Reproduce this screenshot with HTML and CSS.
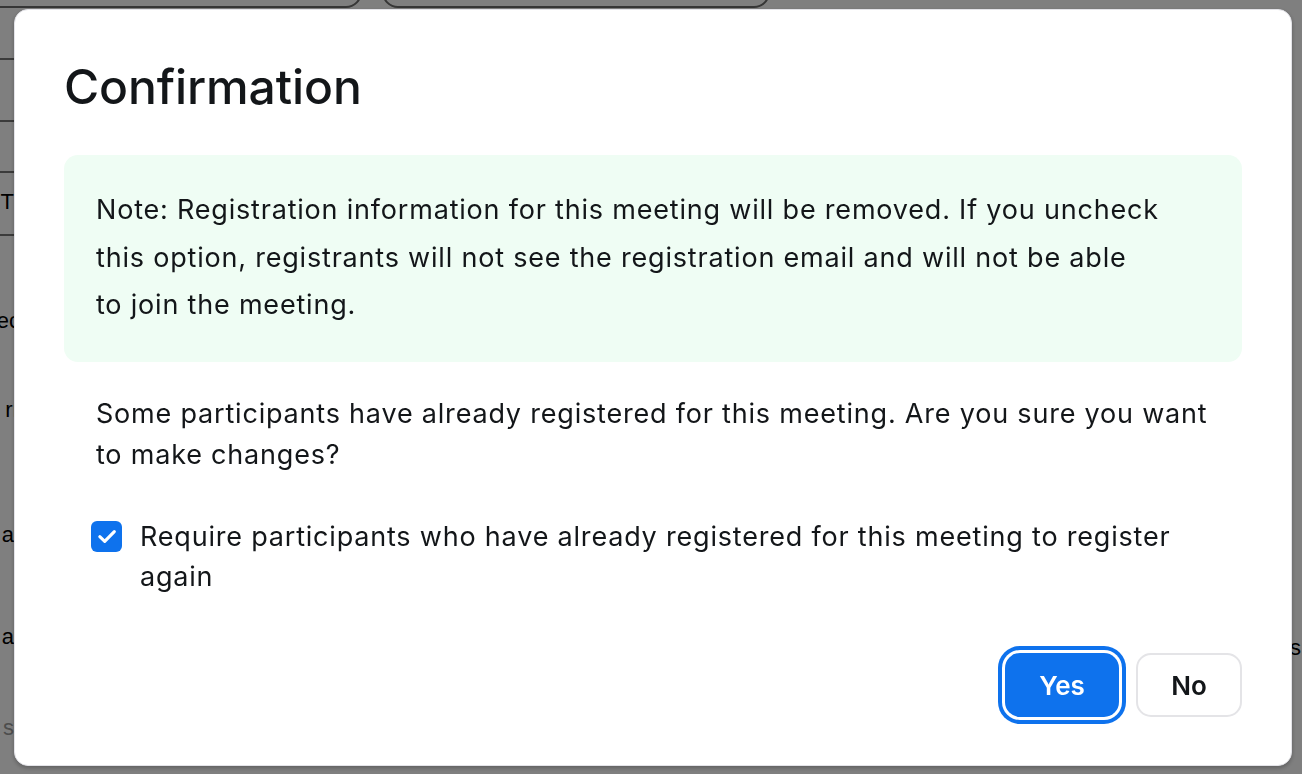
FILE: index.html
```html
<!DOCTYPE html>
<html lang="en">
<head>
<meta charset="utf-8">
<title>Confirmation</title>
<link rel="stylesheet" href="styles.css">
</head>
<body>
<div class="page">
  <div class="page-inputs">
    <div class="pin pin-a"></div>
    <div class="pin pin-b"></div>
  </div>
  <div class="page-body">
    <div class="page-left">
      <div class="prow h52"></div>
      <div class="prow h62"></div>
      <div class="prow h51"></div>
      <div class="prow h63"><span class="frag">IT</span></div>
      <div class="ftxt m70"><span class="frag">ec</span></div>
      <div class="ftxt m59"><span class="frag">rr</span></div>
      <div class="ftxt m95"><span class="frag">at</span></div>
      <div class="ftxt m72"><span class="frag">at</span></div>
      <div class="ftxt m61 muted"><span class="frag">st</span></div>
    </div>
    <div class="page-right">
      <div class="ftxt rfrag">s</div>
    </div>
  </div>
</div>

<div class="overlay">
  <div class="modal" role="dialog" aria-labelledby="dlg-title">
    <h1 class="modal-title" id="dlg-title">Confirmation</h1>
    <div class="note">
      Note: Registration information for this meeting will be removed. If you uncheck<br>
      this option, registrants will not see the registration email and will not be able<br>
      to join the meeting.
    </div>
    <p class="question">Some participants have already registered for this meeting. Are you sure you want to make changes?</p>
    <label class="check-row">
      <span class="checkbox">
        <svg viewBox="0 0 20 20" width="24" height="24" aria-hidden="true"><path d="M4 10.6l4.1 3.9 8-8.2" fill="none" stroke="#fff" stroke-width="2.6" stroke-linecap="round" stroke-linejoin="round"/></svg>
      </span>
      <span class="check-label">Require participants who have already registered for this meeting to register again</span>
    </label>
    <div class="actions">
      <button class="btn btn-primary" type="button">Yes</button>
      <button class="btn btn-secondary" type="button">No</button>
    </div>
  </div>
</div>
</body>
</html>
```

FILE: styles.css
```css
html, body {
  margin: 0;
  padding: 0;
}

body {
  width: 1302px;
  height: 774px;
  overflow: hidden;
  background: #ffffff;
  font-family: Inter, "Liberation Sans", Arial, sans-serif;
  color: #131619;
}

/* ---------- background page (dimmed) ---------- */
.page {
  width: 1302px;
  height: 774px;
}

.page-inputs {
  display: flex;
  gap: 20px;
  margin-top: -32px;
  margin-left: -20px;
  height: 40px;
}

.pin {
  box-sizing: border-box;
  height: 40px;
  border: 2px solid #6c6c6c;
  border-radius: 16px;
}

.pin-a { width: 382px; }
.pin-b { width: 388px; }

.page-body {
  display: flex;
}

.page-left {
  width: 16px;
  display: flex;
  flex-direction: column;
}

.page-right {
  margin-left: auto;
  width: 12px;
  display: flex;
  flex-direction: column;
}

.prow {
  box-sizing: border-box;
  width: 300px;
  border-bottom: 2px solid #777777;
  display: flex;
  align-items: center;
}

.h52 { height: 52px; }
.h62 { height: 62px; }
.h51 { height: 51px; }
.h63 { height: 63px; padding-bottom: 4px; }

.prow .frag {
  width: 14px;
  display: flex;
  justify-content: flex-end;
}

.frag,
.ftxt {
  font-family: "Liberation Sans", Arial, sans-serif;
  font-size: 22px;
  color: #000;
  white-space: nowrap;
}

.ftxt {
  height: 30px;
  line-height: 30px;
  width: 20px;
  display: flex;
  justify-content: flex-end;
}

.m70 { margin-top: 70px; }
.m59 { margin-top: 59px; }
.m95 { margin-top: 95px; }
.m72 { margin-top: 72px; }
.m61 { margin-top: 61px; }

.muted .frag { color: #9a9a9a; }

.rfrag {
  margin-top: 625px;
  justify-content: flex-start;
}

/* ---------- overlay + modal ---------- */
.overlay {
  position: fixed;
  inset: 0;
  background: rgba(0, 0, 0, 0.5);
}

.modal {
  position: absolute;
  left: 14px;
  top: 9px;
  width: 1278px;
  height: 757px;
  box-sizing: border-box;
  background: #ffffff;
  border-radius: 14px;
  border: 1px solid #e3e3e8;
  padding: 48px 49px 48px 49px;
  display: flex;
  flex-direction: column;
  box-shadow: 0 2px 4px rgba(0, 0, 0, 0.25);
}

.modal-title {
  margin: 0;
  font-size: 48px;
  line-height: 58px;
  font-weight: 500;
  color: #131619;
  letter-spacing: -0.1px;
}

.note {
  margin-top: 39px;
  background: #effdf4;
  border-radius: 14px;
  padding: 31px 32px 33px 32px;
  font-size: 27px;
  line-height: 47.5px;
  letter-spacing: 0.8px;
  color: #131619;
  white-space: nowrap;
}

.question {
  margin: 31px 0 0 0;
  padding: 0 32px 0 32px;
  font-size: 27px;
  line-height: 41px;
  letter-spacing: 0.8px;
}

.check-row {
  margin-top: 42px;
  display: flex;
  align-items: flex-start;
  gap: 18px;
  padding-left: 27px;
  font-size: 27px;
  line-height: 40px;
  letter-spacing: 0.8px;
}

.checkbox {
  flex: none;
  width: 31px;
  height: 31px;
  margin-top: 4px;
  border-radius: 6px;
  background: #0e72ed;
  display: flex;
  align-items: center;
  justify-content: center;
}

.check-label {
  flex: 1;
  padding-right: 40px;
}

.actions {
  margin-top: auto;
  display: flex;
  justify-content: flex-end;
  gap: 17px;
}

.btn {
  box-sizing: border-box;
  height: 64px;
  border-radius: 15px;
  font-family: Inter, "Liberation Sans", Arial, sans-serif;
  font-size: 26px;
  font-weight: 600;
  cursor: pointer;
}

.btn-primary {
  width: 114px;
  background: #0e72ed;
  color: #ffffff;
  border: none;
  box-shadow: 0 0 0 3px #ffffff, 0 0 0 7px #0e72ed;
}

.btn-secondary {
  width: 106px;
  background: #ffffff;
  color: #131619;
  border: 2px solid #e4e4e7;
}
```
